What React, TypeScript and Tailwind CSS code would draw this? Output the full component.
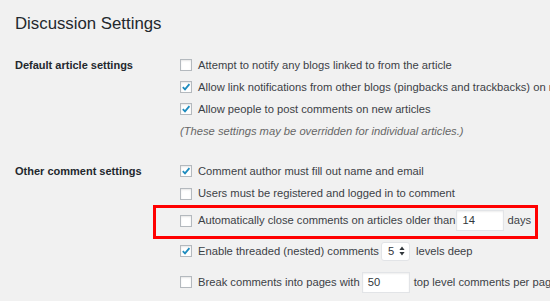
import type { ReactNode } from 'react'

function Check({ on }: { on?: boolean }) {
  return (
    <span className="w-[12px] h-[12px] shrink-0 border border-[#b4b9be] bg-white shadow-[inset_0_1px_2px_rgba(0,0,0,0.1)] flex items-center justify-center">
      {on && (
        <svg width="10" height="10" viewBox="0 0 10 10">
          <path d="M1.8 5.2 L4 7.4 L8.4 2.2" fill="none" stroke="#1e8cbe" strokeWidth="1.8" />
        </svg>
      )}
    </span>
  )
}

function Row({ on, children, className = 'h-[22px]' }: { on?: boolean; children: ReactNode; className?: string }) {
  return (
    <div className={`flex items-center gap-[6px] whitespace-nowrap ${className}`}>
      <Check on={on} />
      {children}
    </div>
  )
}

function Field({ value, w }: { value: string; w: string }) {
  return (
    <span className={`${w} h-[21px] bg-white border border-[#e2e4e7] shadow-[inset_0_1px_2px_rgba(0,0,0,0.07)] flex items-center pl-[5px] text-[#32373c]`}>
      {value}
    </span>
  )
}

export default function App() {
  return (
    <div className="w-[550px] h-[301px] overflow-hidden bg-[#f1f1f1] pl-[15px] text-[11.2px] text-[#3c4146] font-['Liberation_Sans',Arial,sans-serif]">
      <h1 className="pt-[15px] text-[16.8px] leading-[18px] text-[#23282d]">Discussion Settings</h1>

      <div className="flex mt-[21px]">
        <div className="w-[165px] shrink-0 h-[22px] flex items-center font-bold text-[11px] text-[#23282d]">Default article settings</div>
        <div className="flex flex-col">
          <Row>Attempt to notify any blogs linked to from the article</Row>
          <Row on>Allow link notifications from other blogs (pingbacks and trackbacks) on new articles</Row>
          <Row on>Allow people to post comments on new articles</Row>
          <div className="h-[22px] flex items-center italic text-[#666]">(These settings may be overridden for individual articles.)</div>
        </div>
      </div>

      <div className="flex mt-[18px]">
        <div className="w-[165px] shrink-0 h-[22px] flex items-center font-bold text-[11px] text-[#23282d]">Other comment settings</div>
        <div className="flex flex-col">
          <Row on>Comment author must fill out name and email</Row>
          <Row className="h-[23px]">Users must be registered and logged in to comment</Row>
          <div className="relative">
            <Row className="h-[33px] pb-[2px]">
              Automatically close comments on articles older than
              <span className="-ml-[5px] flex items-center gap-[3px]">
                <Field value="14" w="w-[48px]" />
                days
              </span>
            </Row>
            <div className="absolute -left-[27px] top-0 w-[385px] h-[34px] border-[3px] border-[#ff0000]" />
          </div>
          <Row on className="h-[25px] pt-[1px]">
            Enable threaded (nested) comments
            <span className="-ml-[4px] w-[29px] h-[19px] bg-white border border-[#e2e4e7] rounded-[3px] flex items-center justify-between pl-[6px] pr-[4px] text-[#32373c]">
              5
              <svg width="6" height="10" viewBox="0 0 6 10">
                <path d="M3 0.5 L5.6 4 L0.4 4 Z M3 9.5 L5.6 6 L0.4 6 Z" fill="#32373c" />
              </svg>
            </span>
            levels deep
          </Row>
          <Row className="h-[22px] mt-[8px]">
            Break comments into pages with
            <span className="-ml-[4px] flex items-center gap-[4px]">
              <Field value="50" w="w-[48px]" />
              top level comments per page and the first page displayed by default
            </span>
          </Row>
        </div>
      </div>
    </div>
  )
}
